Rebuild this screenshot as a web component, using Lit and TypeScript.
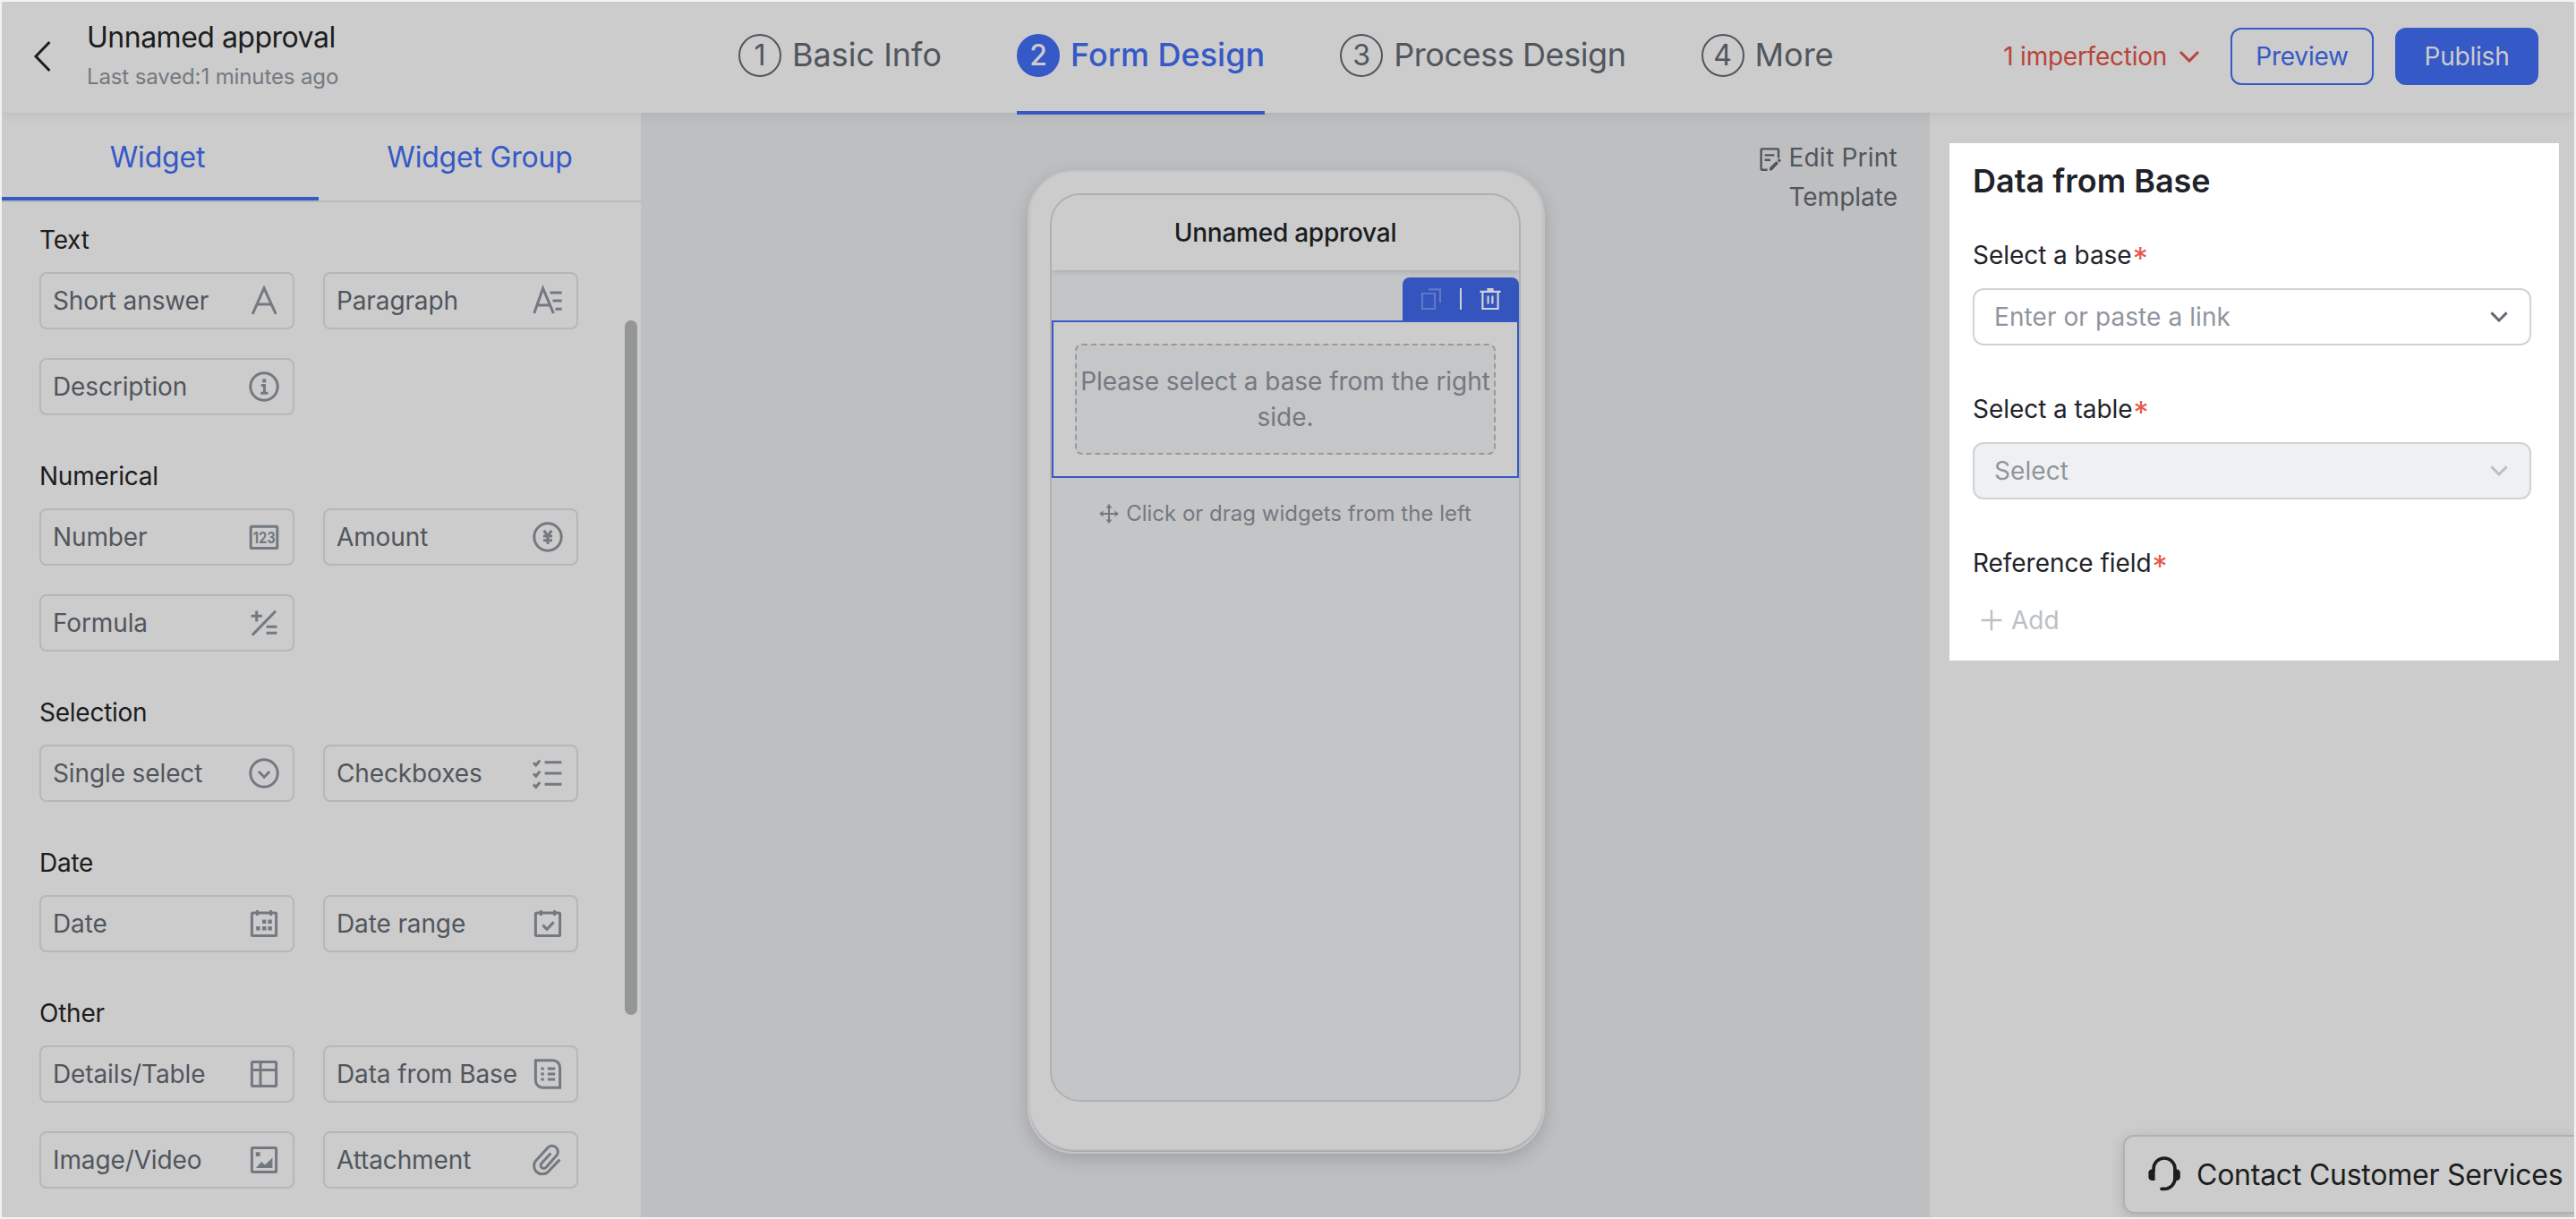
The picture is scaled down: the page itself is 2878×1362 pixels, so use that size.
import { LitElement, css, html, svg, type TemplateResult } from 'lit';
import { customElement, property } from 'lit/decorators.js';
import { classMap } from 'lit/directives/class-map.js';

type Glyph = TemplateResult;

interface Widget {
  label: string;
  icon: string;
}

interface Section {
  title: string;
  widgets: Widget[];
}

const SECTIONS: Section[] = [
  {
    title: 'Text',
    widgets: [
      { label: 'Short answer', icon: 'letter' },
      { label: 'Paragraph', icon: 'paragraph' },
      { label: 'Description', icon: 'info' },
    ],
  },
  {
    title: 'Numerical',
    widgets: [
      { label: 'Number', icon: 'number' },
      { label: 'Amount', icon: 'amount' },
      { label: 'Formula', icon: 'formula' },
    ],
  },
  {
    title: 'Selection',
    widgets: [
      { label: 'Single select', icon: 'single' },
      { label: 'Checkboxes', icon: 'checks' },
    ],
  },
  {
    title: 'Date',
    widgets: [
      { label: 'Date', icon: 'date' },
      { label: 'Date range', icon: 'range' },
    ],
  },
  {
    title: 'Other',
    widgets: [
      { label: 'Details/Table', icon: 'table' },
      { label: 'Data from Base', icon: 'base' },
      { label: 'Image/Video', icon: 'image' },
      { label: 'Attachment', icon: 'clip' },
    ],
  },
];

const STEPS = ['Basic Info', 'Form Design', 'Process Design', 'More'];

const ring = svg`<circle cx="18" cy="18" r="15.2" />`;
const calendar = svg`
  <rect x="4.4" y="6" width="27.2" height="25.6" rx="1" />
  <path d="M10.4 3V9M25.6 3V9" />
`;

// widget icons, 36 x 36
const GLYPHS: Record<string, Glyph> = {
  letter: svg`<path d="M5.2 32.8L18 4L31.2 32.8M10 22H26.4" />`,
  paragraph: svg`<path d="M2.8 32L12.6 4.2L24.4 32M6.4 23H19.6M20.5 9H33.6M23.5 18H33.6M26.5 27.3H33.6" />`,
  info: svg`${ring}<path d="M14.8 16.4H18.4V25M14.2 25.2H22.4" /><rect class="solid" x="16.2" y="9.4" width="4" height="4" />`,
  number: svg`
    <rect x="3.2" y="6.2" width="29.6" height="24.4" rx="1" />
    <text x="5.8" y="24.6" textLength="24.8" lengthAdjust="spacingAndGlyphs">123</text>
  `,
  amount: svg`${ring}<path d="M13.6 10.8L18 16.4L22.4 10.8M18 16.4V26M13 17H23M13 21.8H23" />`,
  formula: svg`<path d="M3.6 10.3H15.8M9.7 4.4V16.4M4.8 31.6L31 4.8M20.6 22.3H32.4M20.6 29.3H32.4" />`,
  single: svg`${ring}<path d="M12 16L18.1 22.2L24.2 16" />`,
  checks: svg`<path d="M14.6 5.7H33.4M14.6 18H33.4M14.6 30.2H33.4M2 6.2L4.8 9L9.2 3.6M2 18.4L4.8 21.2L9.2 15.8M2 30.6L4.8 33.4L9.2 28" />`,
  date: svg`${calendar}<path class="solid" d="M16 13.5h4.4v4.4H16zM22.4 13.5h4.4v4.4h-4.4zM9.2 21.1h4.4v4.4H9.2zM16 21.1h4.4v4.4H16zM22.4 21.1h4.4v4.4h-4.4z" />`,
  range: svg`${calendar}<path d="M12.4 19.6L17 24.4L24.6 16.4" />`,
  table: svg`<rect x="4.4" y="4.4" width="27.2" height="27.2" rx="1" /><path d="M14 4.4V31.6M4.4 13.4H31.6" />`,
  base: svg`
    <path d="M4.4 2.8H23.6A8 8 0 0 1 31.6 10.8V33.2H12.4A8 8 0 0 1 4.4 25.2Z" />
    <path d="M10.4 12H13.8M17.8 12H26.2M10.4 18H13.8M17.8 18H26.2M10.4 24H13.8M17.8 24H26.2" />
  `,
  image: svg`
    <rect x="4.4" y="4.4" width="27.2" height="27.2" rx="1" />
    <path class="solid" d="M8.8 9.2h4.8v4.8H8.8zM9 27L15 20L19 23.4L27.4 15.4V27z" />
  `,
  clip: svg`<path d="M31.4 17.6L18.6 31A8.6 8.6 0 0 1 5.2 18.2L17.6 4.8A6.2 6.2 0 0 1 28 12.8L16.2 26.2A3.4 3.4 0 0 1 10.8 22L21.4 10.6" />`,
};

const FONT = css`
  :host {
    font-family: Inter, 'Liberation Sans', sans-serif;
  }

  svg {
    display: block;
    flex: none;
    fill: none;
    stroke: currentColor;
    stroke-width: 3;
  }

  .solid {
    fill: currentColor;
    stroke: none;
  }
`;

@customElement('widget-card')
export class WidgetCard extends LitElement {
  @property() label = '';
  @property() icon = '';

  static override styles = [
    FONT,
    css`
      :host {
        display: flex;
        align-items: center;
        justify-content: space-between;
        box-sizing: border-box;
        height: 64px;
        padding: 0 14px 0 13px;
        border: 2px solid #b5b7b8;
        border-radius: 8px;
        color: #51565d;
        font-size: 28px;
        letter-spacing: -0.12px;
        white-space: nowrap;
      }

      svg {
        color: #737980;
      }

      text {
        fill: currentColor;
        stroke: none;
        font-size: 17.5px;
        font-weight: 700;
      }
    `,
  ];

  override render() {
    return html`
      <span>${this.label}</span>
      <svg width="36" height="36" viewBox="0 0 36 36">${GLYPHS[this.icon]}</svg>
    `;
  }
}

@customElement('widget-panel')
export class WidgetPanel extends LitElement {
  static override styles = [
    FONT,
    css`
      :host {
        position: relative;
        display: flex;
        flex-direction: column;
        background: #cccccc;
        overflow: hidden;
      }

      .tabs {
        display: flex;
        height: 98px;
        border-bottom: 2px solid #b8b9ba;
      }

      .tab {
        flex: 1;
        text-align: center;
        line-height: 100px;
        font-size: 32px;
        letter-spacing: -0.2px;
        color: #3559c6;
      }

      .tab.active {
        flex: none;
        width: 354px;
        box-sizing: border-box;
        padding-right: 6px;
        border-bottom: 4px solid #3559c6;
      }

      .list {
        flex: 1;
        padding: 22px 70px 0 42px;
      }

      .section {
        margin-bottom: 48px;
      }

      h3 {
        margin: 0 0 16px;
        font-size: 28px;
        font-weight: 400;
        line-height: 40px;
        letter-spacing: -0.25px;
        color: #1b1d20;
      }

      .grid {
        display: grid;
        grid-template-columns: 1fr 1fr;
        gap: 32px;
      }

      .scrollbar {
        position: absolute;
        top: 232px;
        right: 4px;
        width: 14px;
        height: 776px;
        border-radius: 7px;
        background: #949597;
      }
    `,
  ];

  override render() {
    return html`
      <div class="tabs">
        <div class="tab active">Widget</div>
        <div class="tab">Widget Group</div>
      </div>
      <div class="list">
        ${SECTIONS.map(
          (section) => html`
            <div class="section">
              <h3>${section.title}</h3>
              <div class="grid">
                ${section.widgets.map(
                  (w) => html`<widget-card .label=${w.label} .icon=${w.icon}></widget-card>`,
                )}
              </div>
            </div>
          `,
        )}
      </div>
      <div class="scrollbar"></div>
    `;
  }
}

@customElement('phone-preview')
export class PhonePreview extends LitElement {
  static override styles = [
    FONT,
    css`
      :host {
        display: block;
        box-sizing: border-box;
        width: 578px;
        height: 1099px;
        padding: 24px 25px 56px 23px;
        border: 2px solid #c3c4c5;
        border-radius: 52px;
        background: #cccccc;
        box-shadow: 0 6px 20px rgba(0, 0, 0, 0.16), inset 0 -2px 2px #a6a7ae;
      }

      .screen {
        box-sizing: border-box;
        height: 1015px;
        border: 2px solid #afb0b1;
        border-radius: 34px;
        background: #c4c5c7;
        overflow: hidden;
      }

      .bar {
        height: 84px;
        line-height: 84px;
        text-align: center;
        font-size: 28px;
        font-weight: 500;
        letter-spacing: -0.25px;
        color: #1b1d20;
        background: #cccccc;
        box-shadow: 0 2px 6px rgba(0, 0, 0, 0.12);
      }

      .tools {
        display: flex;
        align-items: center;
        box-sizing: border-box;
        width: 130px;
        height: 48px;
        margin: 8px 0 0 auto;
        padding: 0 19px 0 20px;
        justify-content: space-between;
        border-radius: 8px 8px 0 0;
        background: #3455bd;
        color: #cfd1d6;
      }

      .tools svg {
        stroke-width: 2.2;
      }

      .copy {
        color: #6079c5;
      }

      .split {
        width: 2px;
        height: 24px;
        background: #cfd1d6;
      }

      .selected {
        padding: 24px;
        border: 2px solid #3559c6;
        background: #cccccc;
      }

      .placeholder {
        padding: 20px 0;
        border: 2px dashed #97999c;
        border-radius: 8px;
        background: #c5c6c8;
        text-align: center;
        font-size: 28px;
        line-height: 40px;
        letter-spacing: -0.04px;
        color: #737980;
      }

      .hint {
        display: flex;
        align-items: center;
        justify-content: center;
        gap: 8px;
        margin-top: 22px;
        line-height: 36px;
        font-size: 24px;
        color: #737980;
      }

      .hint svg {
        stroke-width: 2;
      }
    `,
  ];

  override render() {
    return html`
      <div class="screen">
        <div class="bar">Unnamed approval</div>
        <div class="tools">
          <svg class="copy" width="24" height="26" viewBox="0 0 24 26">
            <path d="M2 7H16V24H2ZM9 2.4H22V17" />
          </svg>
          <span class="split"></span>
          <svg width="26" height="26" viewBox="0 0 26 26">
            <path d="M1.4 4.8H24.6M4.4 4.8V24H21.6V4.8M10.6 9.6V18.6M15.4 9.6V18.6" />
            <path class="solid" d="M9.4 1h7.2v3.4H9.4z" />
          </svg>
        </div>
        <div class="selected">
          <div class="placeholder">Please select a base from the right<br />side.</div>
        </div>
        <div class="hint">
          <svg width="22" height="22" viewBox="0 0 22 22">
            <path d="M11 2V20M2 11H20" />
            <path
              class="solid"
              d="M11 0L14.4 4.4H7.6zM11 22L14.4 17.6H7.6zM0 11L4.4 7.6V14.4zM22 11L17.6 7.6V14.4z"
            />
          </svg>
          <span>Click or drag widgets from the left</span>
        </div>
      </div>
    `;
  }
}

@customElement('base-settings')
export class BaseSettings extends LitElement {
  static override styles = [
    FONT,
    css`
      :host {
        display: block;
        box-sizing: border-box;
        height: 578px;
        padding: 20px 31px 0 26px;
        background: #ffffff;
        color: #1f2329;
        font-size: 28px;
      }

      h2 {
        margin: 0 0 41px;
        font-size: 36px;
        font-weight: 600;
        line-height: 44px;
      }

      .label {
        display: flex;
        gap: 1px;
        height: 40px;
        line-height: 40px;
        letter-spacing: -0.05px;
      }

      .label i {
        padding-top: 4px;
        font-size: 34px;
        font-style: normal;
        color: #e8574c;
      }

      .select {
        display: flex;
        align-items: center;
        justify-content: space-between;
        box-sizing: border-box;
        height: 64px;
        margin: 17px 0 51px;
        padding: 0 24px 0 22px;
        border: 2px solid #d0d3d6;
        border-radius: 12px;
        letter-spacing: 0.08px;
        color: #8f959e;
      }

      .select svg {
        color: #646a73;
      }

      .select.disabled {
        background: #eff0f1;
      }

      .select.disabled svg {
        color: #bbbfc4;
      }

      .add {
        display: flex;
        align-items: center;
        gap: 10px;
        padding: 24px 0 0 9px;
        line-height: 40px;
        color: #bbbfc4;
      }

      .add svg {
        stroke-width: 2.4;
      }
    `,
  ];

  private select(text: string, disabled = false) {
    return html`
      <div class=${classMap({ select: true, disabled })}>
        <span>${text}</span>
        <svg width="20" height="12" viewBox="0 0 20 12"><path d="M1.4 1.4L10 10L18.6 1.4" /></svg>
      </div>
    `;
  }

  override render() {
    return html`
      <h2>Data from Base</h2>
      <div class="label"><span>Select a base</span><i>*</i></div>
      ${this.select('Enter or paste a link')}
      <div class="label"><span>Select a table</span><i>*</i></div>
      ${this.select('Select', true)}
      <div class="label"><span>Reference field</span><i>*</i></div>
      <div class="add">
        <svg width="24" height="24" viewBox="0 0 24 24"><path d="M12 .6V23.4M.6 12H23.4" /></svg>
        <span>Add</span>
      </div>
    `;
  }
}

@customElement('app-root')
export class AppRoot extends LitElement {
  static override styles = [
    FONT,
    css`
      :host {
        position: relative;
        display: flex;
        flex-direction: column;
        box-sizing: border-box;
        width: 2878px;
        height: 1362px;
        border: 2px solid #f2f2f2;
        background: #cccccc;
        overflow: hidden;
      }

      header {
        position: relative;
        z-index: 1;
        display: grid;
        grid-template-columns: 823px auto 1fr;
        height: 124px;
        background: #cccccc;
        box-shadow: 0 2px 12px rgba(0, 0, 0, 0.08);
      }

      .title {
        display: flex;
        align-items: center;
        padding: 0 0 4px 34px;
        gap: 39px;
        color: #1b1d20;
      }

      .title b {
        display: block;
        padding-top: 2px;
        font-size: 32px;
        font-weight: 400;
        line-height: 44px;
        letter-spacing: -0.5px;
      }

      .title small {
        display: block;
        font-size: 24px;
        line-height: 44px;
        letter-spacing: -0.12px;
        color: #737980;
      }

      .steps {
        display: flex;
        gap: 84px;
        height: 126px;
      }

      .step {
        display: flex;
        align-items: center;
        gap: 12px;
        box-sizing: border-box;
        padding-bottom: 6px;
        font-size: 36px;
        color: #51565d;
      }

      .step span {
        padding-bottom: 3px;
      }

      .step:nth-child(3) span {
        letter-spacing: -0.42px;
      }

      .step i {
        box-sizing: border-box;
        width: 48px;
        height: 48px;
        border: 2px solid #51565d;
        border-radius: 50%;
        text-align: center;
        font-size: 32px;
        font-style: normal;
        line-height: 44px;
      }

      .step.active {
        padding-bottom: 2px;
        border-bottom: 4px solid #3559c6;
        font-weight: 500;
        color: #3559c6;
      }

      .step.active i {
        border-color: #3559c6;
        background: #3559c6;
        color: #cccccc;
      }

      .actions {
        display: flex;
        align-items: center;
        justify-content: flex-end;
        padding: 0 40px 4px 0;
        font-size: 28px;
      }

      .warn {
        display: flex;
        align-items: center;
        gap: 13px;
        margin-right: 34px;
        letter-spacing: -0.25px;
        color: #b94439;
      }

      .button {
        box-sizing: border-box;
        width: 160px;
        height: 64px;
        border: 2px solid #3559c6;
        border-radius: 12px;
        text-align: center;
        line-height: 60px;
        letter-spacing: -0.2px;
        color: #3559c6;
      }

      .button.primary {
        margin-left: 24px;
        background: #3559c6;
        color: #cccccc;
      }

      main {
        flex: 1;
        display: grid;
        grid-template-columns: 714px 1440px 720px;
      }

      .stage {
        display: grid;
        grid-template-columns: 432px 578px 1fr;
        align-items: start;
        background: #bebfc1;
      }

      phone-preview {
        grid-column: 2;
        margin-top: 64px;
      }

      .print {
        display: flex;
        gap: 7px;
        justify-self: end;
        padding: 28px 34px 0 0;
        font-size: 28px;
        line-height: 44px;
        color: #51565d;
      }

      .print svg {
        margin-top: 10px;
        stroke-width: 2.4;
      }

      .print span::first-line {
        letter-spacing: 0.25px;
      }

      aside {
        padding: 34px 17px 0 22px;
      }

      .contact {
        position: absolute;
        right: -2px;
        bottom: 4px;
        display: flex;
        align-items: center;
        gap: 18px;
        box-sizing: border-box;
        width: 506px;
        height: 88px;
        padding-left: 26px;
        border: 2px solid #b0b1b5;
        border-right: 0;
        border-radius: 12px 0 0 12px;
        background: #cccccc;
        box-shadow: 0 4px 16px rgba(0, 0, 0, 0.14);
        font-size: 32px;
        letter-spacing: -0.24px;
        white-space: nowrap;
        color: #1b1d20;
      }
    `,
  ];

  override render() {
    return html`
      <header>
        <div class="title">
          <svg width="22" height="38" viewBox="0 0 22 38"><path d="M19.4 3L4 19L19.4 35" /></svg>
          <div><b>Unnamed approval</b><small>Last saved:1 minutes ago</small></div>
        </div>
        <div class="steps">
          ${STEPS.map(
            (label, i) => html`
              <div class=${classMap({ step: true, active: i === 1 })}>
                <i>${i + 1}</i><span>${label}</span>
              </div>
            `,
          )}
        </div>
        <div class="actions">
          <div class="warn">
            <span>1 imperfection</span>
            <svg width="24" height="14" viewBox="0 0 24 14"><path d="M2 2L12 12L22 2" /></svg>
          </div>
          <div class="button">Preview</div>
          <div class="button primary">Publish</div>
        </div>
      </header>
      <main>
        <widget-panel></widget-panel>
        <div class="stage">
          <phone-preview></phone-preview>
          <div class="print">
            <svg width="26" height="28" viewBox="0 0 26 28">
              <path d="M22 12.6V3.4A1 1 0 0 0 21 2.4H3.6A1 1 0 0 0 2.6 3.4V24.8A1 1 0 0 0 3.6 25.8H9.6M6.6 9.4H17.4M6.6 14.8H13" />
              <path class="solid" d="M12 26.6V23.6L19.6 16L22 18.4L14.6 26.6zM20.6 15L22.6 13L25 15.4L23 17.4z" />
            </svg>
            <span>Edit Print<br />Template</span>
          </div>
        </div>
        <aside><base-settings></base-settings></aside>
      </main>
      <div class="contact">
        <svg width="36" height="40" viewBox="0 0 36 40" stroke-linecap="round">
          <path d="M6 16V14A12 12 0 0 1 30 14V24A12 12 0 0 1 18 36.4H15" stroke-width="3.6" />
          <path class="solid" d="M7.6 14.6H4A4 4 0 0 0 .4 18V23.6A4 4 0 0 0 4 27H7.6zM28.2 14.6H32A4 4 0 0 1 35.8 18V23.6A4 4 0 0 1 32 27H28.2z" />
        </svg>
        <span>Contact Customer Services</span>
      </div>
    `;
  }
}

declare global {
  interface HTMLElementTagNameMap {
    'app-root': AppRoot;
    'base-settings': BaseSettings;
    'phone-preview': PhonePreview;
    'widget-card': WidgetCard;
    'widget-panel': WidgetPanel;
  }
}
